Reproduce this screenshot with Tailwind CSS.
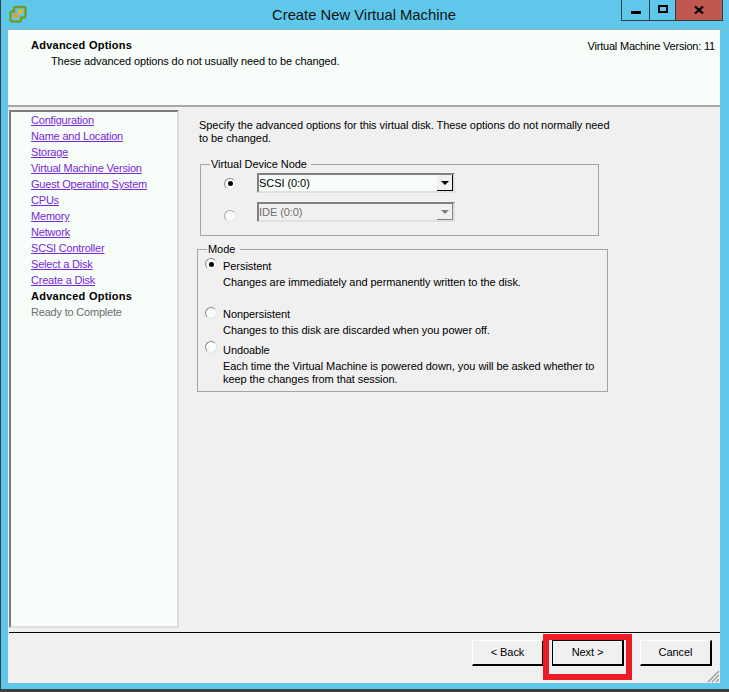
<!DOCTYPE html>
<html lang="en">
<head>
  <meta charset="UTF-8">
  <title>Create New Virtual Machine</title>
  <script src="https://cdn.jsdelivr.net/npm/@tailwindcss/browser@4"></script>
</head>
<body class="bg-white">
  <div class="relative w-[729px] h-[692px] overflow-hidden font-['Liberation_Sans',sans-serif] text-[11px] leading-[13px] tracking-[-0.06px] text-black">
    <!-- window frame -->
    <div class="w-[729px] h-[692px] bg-[#5fc8ea] border-l border-b-[3px] border-[#3a3f44] flex flex-col">
      <!-- title bar -->
      <div class="h-[29px] border-b border-b-[#8fb4c4] box-content shrink-0 flex items-start relative">
        <svg class="ml-[8px] mt-[5px]" width="18" height="18" viewBox="0 0 18 18">
          <path d="M6.500 2h8.500a1.500 1.500 0 0 1 1.500 1.500V11a1.500 1.500 0 0 1-1.500 1.500h-3V15a1.500 1.500 0 0 1-1.500 1.500H3A1.500 1.500 0 0 1 1.500 15V8A1.500 1.500 0 0 1 3 6.500h2V3.500A1.500 1.500 0 0 1 6.500 2z" fill="none" stroke="#6f9e22" stroke-width="2.400"/>
          <rect x="4.500" y="8.500" width="4.500" height="4.500" fill="#eda01e"/>
          <rect x="9" y="4.500" width="4.500" height="4.500" fill="#f4b02f"/>
        </svg>
        <div class="flex-1 text-center text-[14.800px] leading-[18px] tracking-normal pt-[6px] pr-[28px] text-[#111]">Create New Virtual Machine</div>
        <div class="absolute left-[620px] top-0 w-[102px] h-[21px] flex border border-t-0 border-[#2f3d45]">
          <div class="w-[28px] border-r border-[#2f3d45] flex items-center justify-center"><div class="w-[10px] h-[3px] bg-black mt-[5px]"></div></div>
          <div class="w-[26px] border-r border-[#2f3d45] flex items-center justify-center"><div class="w-[10px] h-[8px] border-2 border-black mb-[2px]"></div></div>
          <div class="flex-1 bg-[#c0584f] flex items-center justify-center">
            <svg width="10" height="8" viewBox="0 0 10 8" class="mb-[1px]"><path d="M1 0.500 9 7.500M9 0.500 1 7.500" stroke="#000" stroke-width="2.200"/></svg>
          </div>
        </div>
      </div>

      <!-- client area -->
      <div class="relative ml-[7px] w-[712px] h-[653px] bg-[#f0f0f0] flex flex-col">
        <!-- header -->
        <div class="h-[77px] shrink-0 bg-[#f7fdf9] border-b-2 border-[#a5a5a5] flex justify-between pt-[9px]">
          <div class="pl-[23px]">
            <div class="font-bold tracking-[0.25px]">Advanced Options</div>
            <div class="pl-[20px] mt-[3px] tracking-[-0.1px]">These advanced options do not usually need to be changed.</div>
          </div>
          <div class="pr-[5px] mt-px tracking-[-0.2px]">Virtual Machine Version: 11</div>
        </div>

        <!-- body -->
        <div class="h-[525px] shrink-0 flex">
          <!-- steps -->
          <div class="ml-px mt-[3px] w-[170px] h-[518px] bg-[#f7fdf9] border-2 border-[#dcdfdd] border-l-[#7d7d7d] border-t-[#7d7d7d] pl-[20px] flex flex-col tracking-[-0.2px]">
            <a class="h-[16px] leading-[16px] text-[#7a26d8] underline">Configuration</a>
            <a class="h-[16px] leading-[16px] text-[#7a26d8] underline">Name and Location</a>
            <a class="h-[16px] leading-[16px] text-[#7a26d8] underline">Storage</a>
            <a class="h-[16px] leading-[16px] text-[#7a26d8] underline">Virtual Machine Version</a>
            <a class="h-[16px] leading-[16px] text-[#7a26d8] underline">Guest Operating System</a>
            <a class="h-[16px] leading-[16px] text-[#7a26d8] underline">CPUs</a>
            <a class="h-[16px] leading-[16px] text-[#7a26d8] underline">Memory</a>
            <a class="h-[16px] leading-[16px] text-[#7a26d8] underline">Network</a>
            <a class="h-[16px] leading-[16px] text-[#7a26d8] underline">SCSI Controller</a>
            <a class="h-[16px] leading-[16px] text-[#7a26d8] underline">Select a Disk</a>
            <a class="h-[16px] leading-[16px] text-[#7a26d8] underline">Create a Disk</a>
            <div class="h-[16px] leading-[16px] font-bold tracking-[0.25px]">Advanced Options</div>
            <div class="h-[16px] leading-[16px] text-[#6d6d6d]">Ready to Complete</div>
          </div>

          <!-- options -->
          <div class="pl-[18px] pt-[12px] w-[530px]">
            <p class="pl-[2px] w-[420px]">Specify the advanced options for this virtual disk. These options do not normally need to be changed.</p>

            <fieldset class="ml-[3px] mt-[13px] w-[399px] h-[78px] border border-[#a5a5a5]">
              <legend class="ml-[9px] pl-px pr-[4px] leading-[13px]">Virtual Device Node</legend>
              <div class="flex items-center mt-[2px] h-[20px]">
                <div class="ml-[23px] mt-px w-[12px] h-[12px] rounded-full bg-white border border-[#8a8a8a] border-r-[#e5e5e5] border-b-[#e5e5e5] flex items-center justify-center"><div class="w-[5px] h-[5px] rounded-full bg-black"></div></div>
                <div class="ml-[21px] w-[198px] h-[20px] bg-[#f7fdf9] border-2 border-[#808080] border-r-[#e0e0e0] border-b-[#e0e0e0] flex items-center justify-between">
                  <span class="pt-px">SCSI (0:0)</span>
                  <div class="w-[16px] h-[16px] bg-[#f0f0f0] border-r border-b border-black flex items-center justify-center"><div class="w-0 h-0 border-x-[4px] border-x-transparent border-t-[4px] border-t-black"></div></div>
                </div>
              </div>
              <div class="flex items-center mt-[9px] h-[20px]">
                <div class="ml-[23px] mt-[8px] w-[12px] h-[12px] rounded-full bg-[#f7fdf9] border border-[#a8a8a8] border-r-[#e5e5e5] border-b-[#e5e5e5]"></div>
                <div class="ml-[21px] w-[198px] h-[20px] bg-[#f0f0f0] border-2 border-[#808080] border-r-[#e0e0e0] border-b-[#e0e0e0] flex items-center justify-between text-[#6d6d6d]">
                  <span class="pt-px">IDE (0:0)</span>
                  <div class="w-[16px] h-[16px] bg-[#f0f0f0] border-r border-b border-[#808080] flex items-center justify-center"><div class="w-0 h-0 border-x-[4px] border-x-transparent border-t-[4px] border-t-[#808080]"></div></div>
                </div>
              </div>
            </fieldset>

            <fieldset class="mt-[7px] w-[411px] h-[149px] border border-[#a5a5a5]">
              <legend class="ml-[9px] pl-px pr-[5px] leading-[13px]">Mode</legend>
              <div class="flex h-[35px]">
                <div class="ml-[7px] mt-[2px] w-[12px] h-[12px] rounded-full bg-white border border-[#8a8a8a] border-r-[#e5e5e5] border-b-[#e5e5e5] flex items-center justify-center"><div class="w-[5px] h-[5px] rounded-full bg-black"></div></div>
                <div class="ml-[6px] mt-[4px]">
                  <div>Persistent</div>
                  <div class="mt-[3px]">Changes are immediately and permanently written to the disk.</div>
                </div>
              </div>
              <div class="flex h-[36px] mt-[12px]">
                <div class="ml-[7px] mt-[4px] w-[12px] h-[12px] rounded-full bg-[#f7fdf9] border border-[#8a8a8a] border-r-[#e5e5e5] border-b-[#e5e5e5]"></div>
                <div class="ml-[6px] mt-[5px]">
                  <div>Nonpersistent</div>
                  <div class="mt-[3px]">Changes to this disk are discarded when you power off.</div>
                </div>
              </div>
              <div class="flex">
                <div class="ml-[7px] w-[12px] h-[12px] mt-[2px] rounded-full bg-[#f7fdf9] border border-[#8a8a8a] border-r-[#e5e5e5] border-b-[#e5e5e5]"></div>
                <div class="ml-[6px] mt-[5px] w-[375px]">
                  <div>Undoable</div>
                  <div class="mt-[3px]">Each time the Virtual Machine is powered down, you will be asked whether to keep the changes from that session.</div>
                </div>
              </div>
            </fieldset>
          </div>
        </div>

        <!-- footer -->
        <div class="flex-1 border-t border-black ml-px flex justify-end pt-[7px] pr-[8px]">
          <button class="w-[72px] h-[26px] bg-[#f0f0f0] border border-white border-r-2 border-b-2 border-r-black border-b-black">&lt; Back</button>
          <button class="w-[72px] h-[26px] ml-[8px] mr-[16px] bg-[#f0f0f0] border-2 border-black border-t border-l">Next &gt;</button>
          <button class="w-[72px] h-[26px] bg-[#f0f0f0] border border-white border-r-2 border-b-2 border-r-black border-b-black">Cancel</button>
        </div>

        <!-- resize grip -->
        <svg class="absolute right-0 bottom-0" width="13" height="13" viewBox="0 0 13 13">
          <path d="M12 1 1 12M12 5 5 12M12 9 9 12" stroke="#a0a0a0" stroke-width="1.500" fill="none"/>
        </svg>
      </div>
    </div>

    <!-- red annotation around Next -->
    <div class="absolute left-[543px] top-[634px] w-[89px] h-[46px] border-[6px] border-[#ed1c24]"></div>
  </div>
</body>
</html>
